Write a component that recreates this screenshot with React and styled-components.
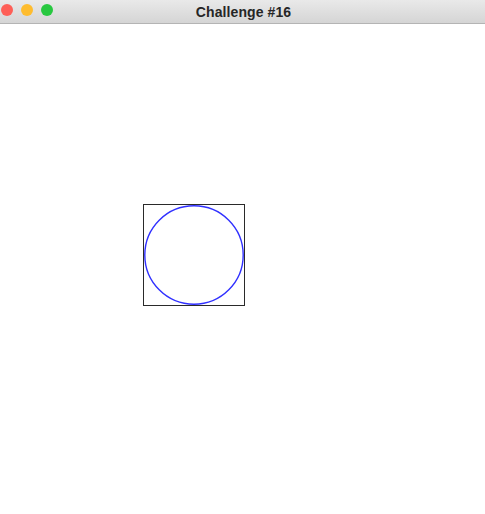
import React from "react";
import styled, { createGlobalStyle } from "styled-components";

const Global = createGlobalStyle`
  html, body { margin: 0; padding: 0; background: #ffffff; }
  body { font-family: "Helvetica Neue", "Liberation Sans", Arial, sans-serif; }
`;

const Window = styled.div`
  width: 485px;
  height: 514px;
  display: flex;
  flex-direction: column;
  background: #ffffff;
  overflow: hidden;
`;

const TitleBar = styled.div`
  position: relative;
  height: 23px;
  flex: 0 0 23px;
  display: flex;
  align-items: center;
  justify-content: center;
  background: linear-gradient(#e9e9e9, #d5d5d5);
  border-bottom: 1px solid #b4b4b4;
`;

const Lights = styled.div`
  position: absolute;
  left: 1px;
  top: 4px;
  display: flex;
  gap: 8px;
`;

const Light = styled.span`
  width: 12px;
  height: 12px;
  border-radius: 50%;
  background: ${(p) => p.$color};
`;

const Title = styled.div`
  font-size: 14px;
  font-weight: bold;
  color: #262626;
  letter-spacing: 0.1px;
  margin-left: 2px;
`;

const Canvas = styled.div`
  flex: 1;
  padding-top: 180px;
  padding-left: 143px;
`;

const Box = styled.div`
  width: 100px;
  height: 100px;
  border: 1px solid #2a2a2a;
  display: flex;
`;

export default function App() {
  return (
    <>
      <Global />
      <Window>
        <TitleBar>
          <Lights>
            <Light $color="#fe5f57" />
            <Light $color="#febc2e" />
            <Light $color="#28c840" />
          </Lights>
          <Title>Challenge #16</Title>
        </TitleBar>
        <Canvas>
          <Box>
            <svg width="100" height="100" viewBox="0 0 100 100">
              <circle cx="50" cy="50" r="49.2" fill="none" stroke="#3030ff" strokeWidth="1.4" />
            </svg>
          </Box>
        </Canvas>
      </Window>
    </>
  );
}
